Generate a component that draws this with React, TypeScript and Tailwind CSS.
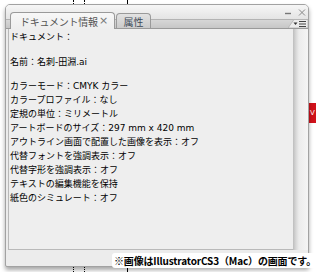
import React from 'react';

const lines = [
  'カラーモード：CMYK カラー',
  'カラープロファイル：なし',
  '定規の単位：ミリメートル',
  'アートボードのサイズ：297 mm x 420 mm',
  'アウトライン画面で配置した画像を表示：オフ',
  '代替フォントを強調表示：オフ',
  '代替字形を強調表示：オフ',
  'テキストの編集機能を保持',
  '紙色のシミュレート：オフ',
];

export default function App() {
  return (
    <div className="relative w-[316px] h-[272px] overflow-hidden bg-white font-['DejaVu_Sans','Noto_Sans_CJK_JP',sans-serif]">
      {/* guides behind the panel */}
      <div className="absolute left-[73px] top-0 h-full border-l border-dotted border-black" />
      <div className="absolute left-[84px] top-0 h-full border-l border-dotted border-black" />
      <div className="absolute left-[127px] top-0 h-full w-px bg-black" />
      <div className="absolute left-[309px] top-[103px] w-[10px] h-[20px] bg-[#d0121b] text-white text-[7px] leading-[20px] pl-[1px]">V</div>

      {/* panel */}
      <div className="relative z-10 ml-[5px] mt-[4px] w-[304px] h-[263px] flex flex-col border border-[#a2a2a2] rounded-t-[5px] rounded-b-[2px] bg-[#ececec] shadow-[0_3px_4px_rgba(0,0,0,0.35)]">
        {/* header with tabs */}
        <div className="flex items-end h-[24px] pl-[4px] border-b border-[#9a9a9a] rounded-t-[4px] bg-[linear-gradient(to_bottom,#f6f6f6_0px,#e4e4e4_14px,#b3b3b3_14px,#b3b3b3_15px,#d7d7d7_15px,#c5c5c5_24px)]">
          <div className="relative z-10 -mb-px flex items-center w-[105px] h-[17px] pl-[9px] pr-[6px] border border-b-0 border-[#9a9a9a] rounded-t-[4px] bg-[linear-gradient(to_bottom,#f7f7f7,#eeeeee)] font-['Noto_Sans_CJK_JP',sans-serif] text-[10px] text-[#555] tracking-[-0.3px]">
            <span>ドキュメント情報</span>
            <span className="ml-auto text-[11px] text-[#777] font-['DejaVu_Sans',sans-serif]">×</span>
          </div>
          <div className="flex items-center justify-center w-[35px] h-[15px] ml-[1px] border border-b-0 border-[#9a9a9a] rounded-t-[4px] bg-[linear-gradient(to_bottom,#e2e2e2,#cbcbcb)] font-['Noto_Sans_CJK_JP',sans-serif] text-[10px] text-[#3e4a58]">
            属性
          </div>
          <div className="flex-1" />
          <div className="flex flex-col items-end h-full">
            <svg width="24" height="11" viewBox="0 0 24 11" className="mt-[2px]">
              <line x1="1" y1="6.5" x2="7" y2="6.5" stroke="#777" strokeWidth="1.4" />
              <path d="M15 2.5 L21 8.5 M21 2.5 L15 8.5" stroke="#888" strokeWidth="1" />
            </svg>
            <svg width="20" height="9" viewBox="0 0 20 9" className="mt-auto">
              <path d="M0 9 L6 0.5 L20 0.5 L20 9 Z" fill="#ececec" stroke="#b0b0b0" strokeWidth="0.8" />
              <path d="M5.5 3.5 L9.5 3.5 L7.5 6 Z" fill="#333" />
              <path d="M11 2.5 H18 M11 5 H18 M11 7.5 H18" stroke="#444" strokeWidth="1" />
            </svg>
          </div>
        </div>

        {/* content + scrollbar */}
        <div className="flex pl-[2px] h-[221px]">
          <div className="w-[285px] h-full bg-[#eeeeee] border-l border-b border-[#b9b9b9] pl-[1px] text-[9px] leading-[14px] text-black">
            <div className="mt-[1px]">ドキュメント：</div>
            <div className="mt-[11px]">名前：名刺-田淵.ai</div>
            <div className="mt-[10px]">
              {lines.map((l) => (
                <div key={l}>{l}</div>
              ))}
            </div>
          </div>
          <div className="w-[15px] h-full bg-[linear-gradient(to_right,#bdbdbd_0px,#d8d8d8_3px,#ececec_6px,#f5f5f5_15px)]" />
        </div>
      </div>

      {/* caption */}
      <div className="absolute z-20 right-0 bottom-[4px] bg-white pl-[2px] rounded-l-[3px] font-['Noto_Sans_CJK_JP',sans-serif] font-bold text-[10px] leading-[15px] tracking-[-0.15px] text-black whitespace-nowrap">
        ※画像はIllustratorCS3（Mac）の画面です。
      </div>
    </div>
  );
}
